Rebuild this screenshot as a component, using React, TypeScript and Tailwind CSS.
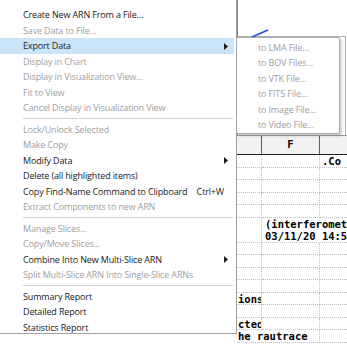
type Item =
  | { sep: true }
  | { label: string; off?: boolean; arrow?: boolean; hot?: boolean; keys?: string };

const menu: Item[] = [
  { label: "Create New ARN From a File..." },
  { label: "Save Data to File...", off: true },
  { label: "Export Data", arrow: true, hot: true },
  { label: "Display in Chart", off: true },
  { label: "Display in Visualization View...", off: true },
  { label: "Fit to View", off: true },
  { label: "Cancel Display in Visualization View", off: true },
  { sep: true },
  { label: "Lock/Unlock Selected", off: true },
  { label: "Make Copy", off: true },
  { label: "Modify Data", arrow: true },
  { label: "Delete (all highlighted items)" },
  { label: "Copy Find-Name Command to Clipboard", keys: "Ctrl+W" },
  { label: "Extract Components to new ARN", off: true },
  { sep: true },
  { label: "Manage Slices...", off: true },
  { label: "Copy/Move Slices...", off: true },
  { label: "Combine Into New Multi-Slice ARN", arrow: true },
  { label: "Split Multi-Slice ARN Into Single-Slice ARNs", off: true },
  { sep: true },
  { label: "Summary Report" },
  { label: "Detailed Report" },
  { label: "Statistics Report" },
];

const exportItems = [
  "to LMA File...",
  "to BOV Files...",
  "to VTK File...",
  "to FITS File...",
  "to Image File...",
  "to Video File...",
];

// grid rows: [colA, colF, colG], span marks text running into the next cell
const rows: { a?: string; f?: string; g?: string; spanA?: boolean; spanF?: boolean }[] = [
  { g: ".Co" },
  {},
  {},
  {},
  {},
  { f: "(interferomet", spanF: true },
  { f: "03/11/20 14:5", spanF: true },
  {},
  {},
  {},
  {},
  { a: "ions" },
  {},
  { a: "cted" },
  { a: "he rautrace", spanA: true },
];

const Arrow = () => (
  <svg width="4" height="7" viewBox="0 0 4 7" className="shrink-0">
    <path d="M0 0 L4 3.5 L0 7 Z" fill="#1a1a1a" />
  </svg>
);

const ContextMenu = () => (
  <div className="absolute left-0 top-0 w-[237px] h-[334px] bg-white border-r border-b border-[#a0a0a0] pt-[7.25px] font-['Open_Sans','Noto_Sans',sans-serif] text-[9px] tracking-[-0.15px]">
    {menu.map((it, i) =>
      "sep" in it ? (
        <div key={i} className="h-[6px] flex items-center pl-[23px] pr-[3px]">
          <div className="h-px w-full bg-[#d0d0d0]" />
        </div>
      ) : (
        <div
          key={i}
          className={`h-[15.5px] flex items-center pl-[23px] pr-[6px] mr-[2px] ${it.hot ? "bg-[#cce4f7]" : ""} ${
            it.off ? "text-[#a0a0a0]" : "text-[#1a1a1a]"
          }`}
        >
          <span className="flex-1 whitespace-nowrap">{it.label}</span>
          {it.keys && <span className="mr-[4px]">{it.keys}</span>}
          {it.arrow && <Arrow />}
        </div>
      )
    )}
  </div>
);

const ExportMenu = () => (
  <div className="absolute left-[236px] top-[37px] w-[104px] h-[97px] bg-white border border-[#a8a8a8] rounded-[2px] shadow-[2px_2px_3px_rgba(0,0,0,0.2)] py-[1.5px] font-['Open_Sans','Noto_Sans',sans-serif] text-[9px] tracking-[-0.15px] text-[#a0a0a0]">
    {exportItems.map((t) => (
      <div key={t} className="h-[15.5px] flex items-center pl-[21px] whitespace-nowrap">
        {t}
      </div>
    ))}
  </div>
);

const cell = "border-b border-dotted border-[#c0c0c0] leading-[12px] whitespace-nowrap";

const Sheet = () => (
  <div className="flex flex-col font-['DejaVu_Sans_Mono',monospace] font-bold text-[10.5px] text-black">
    <div className="grid grid-cols-[25px_58px_1fr] h-[20px] border-t border-b border-t-[#a0a0a0] border-b-[#202020] bg-[#f2f2f2]">
      <div className="border-r border-[#606060]" />
      <div className="border-r border-[#606060] flex items-center justify-center">F</div>
      <div />
    </div>
    {rows.map((r, i) => (
      <div key={i} className="grid grid-cols-[25px_58px_1fr] h-[12.5px] overflow-hidden">
        {r.spanA ? (
          <div className={`col-span-2 border-r pl-[1px] ${cell}`}>{r.a}</div>
        ) : (
          <div className={`border-r overflow-hidden pl-[1px] ${cell}`}>{r.a}</div>
        )}
        {!r.spanA &&
          (r.spanF ? (
            <div className={`col-span-2 pl-[3px] ${cell}`}>{r.f}</div>
          ) : (
            <div className={`border-r pl-[3px] ${cell}`}>{r.f}</div>
          ))}
        {!r.spanF && <div className={`pl-[2px] ${cell}`}>{r.g}</div>}
      </div>
    ))}
  </div>
);

export default function App() {
  return (
    <div className="relative w-[347px] h-[344px] overflow-hidden bg-white">
      {/* window behind the menu */}
      <div className="flex h-full">
        <div className="w-[237px] shrink-0" />
        <div className="flex-1 flex flex-col">
          <div className="h-[135px] border-l border-[#808080] flex flex-col">
            <div className="relative h-[36px]">
              <svg width="20" height="10" viewBox="0 0 20 10" className="absolute left-[13px] top-[28px]">
                <path d="M1 9 L17 2" stroke="#1f4fe0" strokeWidth="1.5" fill="none" />
              </svg>
            </div>
            <div className="flex-1 border-t border-r border-[#b0b0b0] mr-[1px]" />
          </div>
          <Sheet />
        </div>
      </div>
      <ContextMenu />
      <ExportMenu />
    </div>
  );
}
